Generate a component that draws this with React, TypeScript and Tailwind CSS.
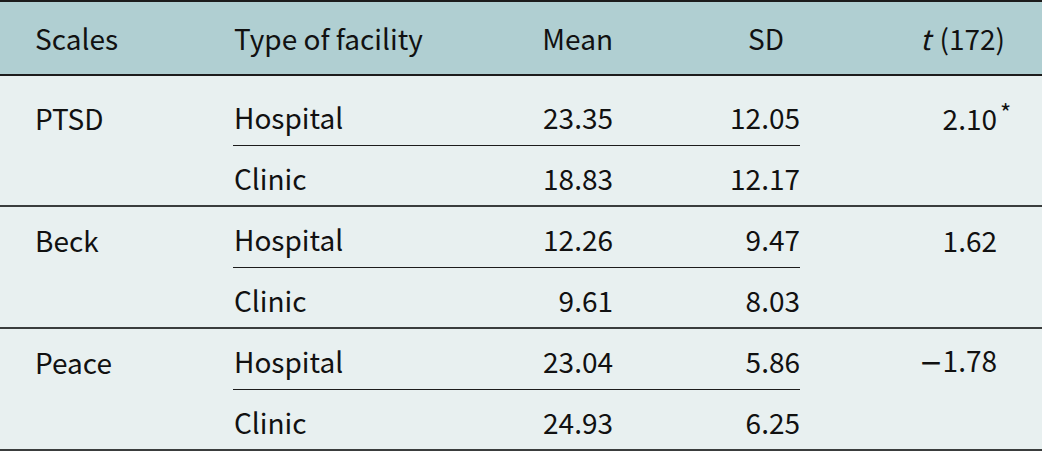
import React from "react";

type Row = { type: string; mean: string; sd: string };
type Group = { scale: string; t: string; neg?: boolean; star?: boolean; rows: Row[] };

const groups: Group[] = [
  {
    scale: "PTSD",
    t: "2.10",
    star: true,
    rows: [
      { type: "Hospital", mean: "23.35", sd: "12.05" },
      { type: "Clinic", mean: "18.83", sd: "12.17" },
    ],
  },
  {
    scale: "Beck",
    t: "1.62",
    rows: [
      { type: "Hospital", mean: "12.26", sd: "9.47" },
      { type: "Clinic", mean: "9.61", sd: "8.03" },
    ],
  },
  {
    scale: "Peace",
    t: "1.78",
    neg: true,
    rows: [
      { type: "Hospital", mean: "23.04", sd: "5.86" },
      { type: "Clinic", mean: "24.93", sd: "6.25" },
    ],
  },
];

const App: React.FC = () => {
  return (
    <div
      className="w-[1042px] h-[456px] bg-white text-[28px] leading-[36px] text-[#111]"
      style={{ fontFamily: '"Noto Sans CJK SC", "Noto Sans", sans-serif' }}
    >
      <div className="border-t-2 border-b-2 border-[#1c1c1c] bg-[#b0cfd2] h-[76px] flex items-center">
        <div className="w-[233px] pl-[35px]">Scales</div>
        <div className="w-[250px] pl-[1px]">Type of facility</div>
        <div className="w-[130px] text-right">Mean</div>
        <div className="w-[187px] text-right pr-[16px]">SD</div>
        <div className="flex-1 text-right pr-[37px]">
          <span className="italic">t</span>
          <span className="ml-[9px]">(172)</span>
        </div>
      </div>

      <div className="bg-[#e8f0f0]">
        {groups.map((g, gi) => (
          <div
            key={g.scale}
            className={
              "flex border-b-2 border-[#3a3d3d] " + (gi === 0 ? "pt-[9px]" : "")
            }
          >
            <div className="w-[233px] pl-[35px] h-[61px] pt-[4px] flex items-center">
              {g.scale}
            </div>
            <div className="w-[567px] flex flex-col">
              {g.rows.map((r, ri) => (
                <div
                  key={r.type}
                  className={
                    "flex items-center pt-[4px] " +
                    (ri === 0 ? "h-[61px] border-b border-[#1c1c1c]" : "h-[59px]")
                  }
                >
                  <div className="w-[250px] pl-[1px]">{r.type}</div>
                  <div className="w-[130px] text-right">{r.mean}</div>
                  <div className="w-[187px] text-right">{r.sd}</div>
                </div>
              ))}
            </div>
            <div className="flex-1 h-[61px] pt-[4px] flex items-center justify-end pr-[45px]">
              <span className="relative">
                {g.neg && (
                  <span style={{ fontFamily: '"DejaVu Sans", sans-serif' }}>
                    {"\u2212"}
                  </span>
                )}
                {g.t}
                {g.star && (
                  <span className="absolute left-full top-[0px] ml-[3px] text-[24px] leading-[24px]">
                    *
                  </span>
                )}
              </span>
            </div>
          </div>
        ))}
      </div>
    </div>
  );
};

export default App;
